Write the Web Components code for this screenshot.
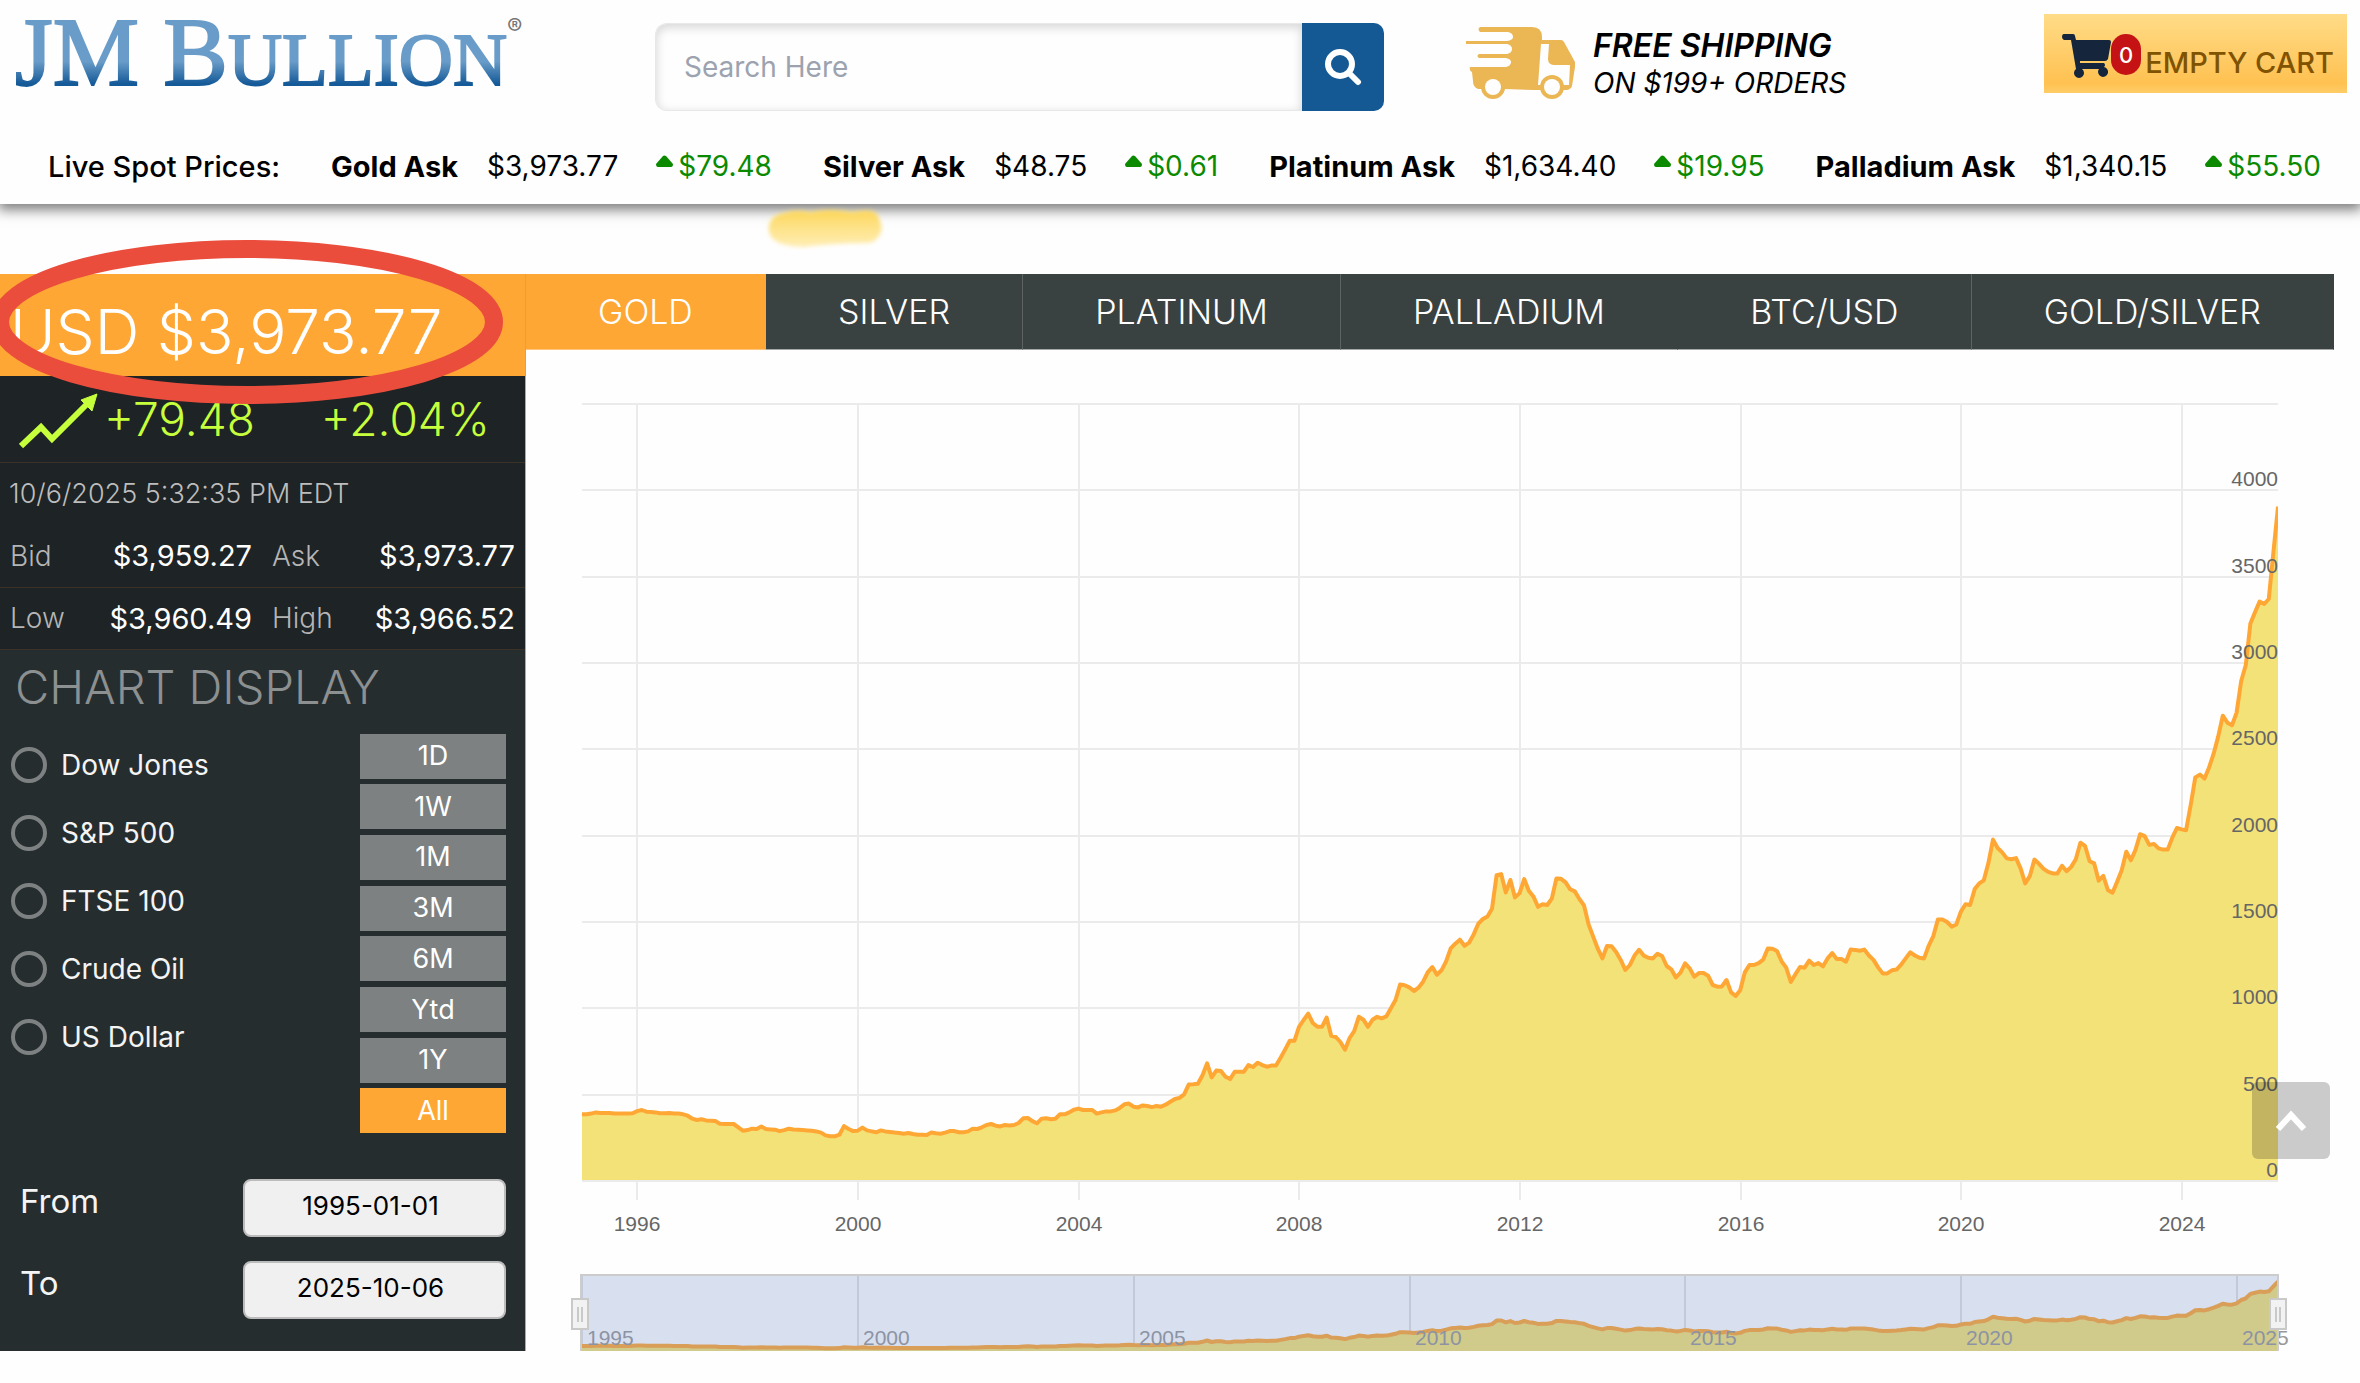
<!DOCTYPE html>
<html lang="en">
<head>
<meta charset="utf-8">
<meta name="viewport" content="width=device-width, initial-scale=1">
<title>Gold Price Chart | JM Bullion</title>
<style>
  html, body { margin: 0; background: #fefefe; }
  body {
    --orange: #ffa735;
    --line: #3a3129;
    font-family: Inter, "Open Sans", sans-serif;
    color: #000;
  }
</style>
</head>
<body>
  <jm-page>
    <jm-header slot="header">
      <spot-price name="Gold Ask" price="$3,973.77" change="$79.48"></spot-price>
      <spot-price name="Silver Ask" price="$48.75" change="$0.61"></spot-price>
      <spot-price name="Platinum Ask" price="$1,634.40" change="$19.95"></spot-price>
      <spot-price name="Palladium Ask" price="$1,340.15" change="$55.50"></spot-price>
    </jm-header>
    <price-panel slot="side"></price-panel>
    <metal-tabs slot="main" active="GOLD" tabs="GOLD,SILVER,PLATINUM,PALLADIUM,BTC/USD,GOLD/SILVER"></metal-tabs>
    <price-chart slot="main"></price-chart>
  </jm-page>
  <scroll-top></scroll-top>

<script>
class JmPage extends HTMLElement {
  constructor() {
    super();
    this.attachShadow({ mode: 'open' }).innerHTML = `
      <style>
        :host { display: block; position: relative; overflow-x: hidden; }
        main { display: flex; align-items: flex-start; margin-top: 70px; }
        .side { flex: 0 0 526px; }
        .content { flex: 1 1 auto; min-width: 0; }
        .marker { position: absolute; left: 760px; top: 200px; width: 132px; height: 56px; }
      </style>
      <slot name="header"></slot>
      <svg class="marker" viewBox="0 0 132 56" aria-hidden="true">
        <defs>
          <linearGradient id="ink" x1="0" y1="0" x2="0" y2="1">
            <stop offset="0" stop-color="#fdd656"/>
            <stop offset=".35" stop-color="#fddf7c"/>
            <stop offset="1" stop-color="#ffeeb5"/>
          </linearGradient>
          <filter id="soft"><feGaussianBlur stdDeviation="2"/></filter>
        </defs>
        <path filter="url(#soft)" fill="url(#ink)" d="M24 13Q34 9 50 12Q70 8 92 12Q112 8 117 14Q123 26 121 32Q116 43 108 43Q74 43 44 47Q24 47 14 40Q6 32 10 22Q14 14 24 13Z"/>
      </svg>
      <main>
        <div class="side"><slot name="side"></slot></div>
        <div class="content"><slot name="main"></slot></div>
      </main>
    `;
  }
}
customElements.define('jm-page', JmPage);

class JmHeader extends HTMLElement {
  constructor() {
    super();
    this.attachShadow({ mode: 'open' }).innerHTML = `
      <style>
        :host {
          display: flex;
          flex-direction: column;
          box-sizing: border-box;
          height: 204px;
          background: #fefefe;
          box-shadow: 0 4px 12px 2px rgba(0, 0, 0, .5);
        }
        .top {
          display: flex;
          align-items: flex-start;
          padding: 14px 13px 0 15px;
          height: 98px;
        }
        .logo {
          flex: 0 0 640px;
          display: flex;
          align-items: flex-start;
          text-decoration: none;
          color: #777;
        }
        .logo .word {
          font-family: "Liberation Serif", serif;
          font-size: 75px;
          line-height: 78px;
          white-space: nowrap;
          background: linear-gradient(#699cc8 56%, #155a98 82%);
          -webkit-background-clip: text;
          background-clip: text;
          -webkit-text-stroke: 2px transparent;
          color: transparent;
        }
        .logo .cap { font-size: 97px; }
        .logo .reg { font-size: 23px; line-height: 26px; }
        form {
          flex: 0 1 729px;
          display: flex;
          height: 88px;
          margin: 9px 0 0;
        }
        input {
          flex: 1 1 auto;
          min-width: 0;
          box-sizing: border-box;
          border: 1px solid #e8e8e8;
          border-right: 0;
          border-radius: 12px 0 0 12px;
          box-shadow: inset 0 3px 10px 1px rgba(0, 0, 0, .15);
          background: #fefefe;
          padding: 0 28px;
          font: 28px Inter, sans-serif;
        }
        input::placeholder { color: #9ca3af; opacity: 1; }
        form button {
          flex: 0 0 82px;
          border: 0;
          border-radius: 0 10px 10px 0;
          background: #145994;
          padding: 0;
          display: grid;
          place-items: center;
        }
        .ship {
          display: flex;
          gap: 18px;
          margin-left: 82px;
          padding-top: 11px;
          font-style: italic;
          white-space: nowrap;
        }
        .ship svg { width: 109px; height: 76px; }
        .ship strong { display: block; font-size: 32px; line-height: 42px; font-weight: 600; }
        .ship span { display: block; font-size: 28px; line-height: 32px; }
        .cart {
          display: flex;
          box-sizing: border-box;
          width: 303px;
          height: 79px;
          margin-left: auto;
          padding: 20px 13px 0 18px;
          border: 0;
          background: linear-gradient(#ffdc88, #ffc151 88%, #ffcd68);
          color: #805300;
          font: 500 29px/34px Inter, sans-serif;
          white-space: nowrap;
        }
        .cart svg { width: 49px; height: 46px; flex: none; }
        .badge {
          flex: none;
          width: 30px;
          height: 41px;
          border-radius: 15px;
          background: #c41215;
          color: #fff;
          font-size: 22px;
          line-height: 42px;
          text-align: center;
        }
        .cart .label { margin: 12px 0 0 auto; }
        .ticker {
          display: flex;
          justify-content: space-between;
          align-items: center;
          height: 40px;
          margin-top: 34px;
          padding: 0 39px 0 48px;
          font-size: 28px;
          white-space: nowrap;
        }
        .ticker .title { font-weight: 500; font-size: 29px; }
      </style>
      <div class="top">
        <a class="logo" href="#" aria-label="JM Bullion">
          <span class="word"><span class="cap">JM B</span>ULLION</span><span class="reg">®</span>
        </a>
        <form role="search">
          <input type="search" placeholder="Search Here" aria-label="Search Here">
          <button type="button" aria-label="Search">
            <svg width="38" height="38" viewBox="0 0 38 38" fill="none" stroke="#fff" stroke-linecap="round">
              <circle cx="16" cy="16" r="12" stroke-width="6"/>
              <path d="M26 26L34 34" stroke-width="6"/>
            </svg>
          </button>
        </form>
        <div class="ship">
          <svg viewBox="0 0 109 76" fill="#ebb654" aria-hidden="true">
            <path d="M14 2H66Q76 2 76 12V15H95Q97 15 98 17L109 37V42L106 61Q105 64 101 65H97A12 12 0 0 1 75 65H69L39 64A12 12 0 0 1 16 64H12Q7 62 7 56L6 47Q3 46 4 42H40Q45 41 45 37Q45 34 40 33H13Q10 31 13 29H41Q46 28 46 24Q46 20 41 19H0V16H41Q47 15 47 12Q47 8 42 7H14Q11 4 14 2Z"/>
            <path fill="#fefefe" d="M75 19H83L82 34Q82 40 89 40H104L103 60H97A12 12 0 0 0 75 60H72Z"/>
            <circle cx="27" cy="62" r="12"/>
            <circle cx="27" cy="62" r="8" fill="#fefefe"/>
            <circle cx="86" cy="62" r="12"/>
            <circle cx="86" cy="62" r="8" fill="#fefefe"/>
          </svg>
          <div><strong>FREE SHIPPING</strong><span>ON $199+ ORDERS</span></div>
        </div>
        <button type="button" class="cart">
          <svg viewBox="0 0 49 46" fill="#15253c" aria-hidden="true">
            <path d="M2 0H11Q13 0 13 2L14 6H47Q49 6 49 8L46 25Q45 27 43 27H18V29H42Q44 31 42 33H42A5 5 0 1 1 37 35H20A5 5 0 1 1 14 35L9 6H2Q0 5 0 3Q0 0 2 0Z"/>
          </svg>
          <span class="badge">0</span>
          <span class="label">EMPTY CART</span>
        </button>
      </div>
      <div class="ticker">
        <span class="title">Live Spot Prices:</span>
        <slot></slot>
      </div>
    `;
  }
}
customElements.define('jm-header', JmHeader);

class SpotPrice extends HTMLElement {
  connectedCallback() {
    if (!this.shadowRoot) this.attachShadow({ mode: 'open' });
    this.shadowRoot.innerHTML = `
      <style>
        :host { display: flex; align-items: center; }
        b { font-weight: 700; font-size: 29px; margin-right: 29px; }
        svg { width: 17px; height: 12px; margin: 0 5px 10px 38px; }
        .change { color: #0b8a00; }
      </style>
      <b>${this.getAttribute('name')}</b>
      <span>${this.getAttribute('price')}</span>
      <svg viewBox="0 0 17 12" aria-hidden="true"><path fill="#0b8a00" d="M7 1Q8 0 10 1L17 9Q17 12 15 12H2Q0 12 0 9Z"/></svg>
      <span class="change">${this.getAttribute('change')}</span>
    `;
  }
}
customElements.define('spot-price', SpotPrice);

class MetalTabs extends HTMLElement {
  connectedCallback() {
    if (!this.shadowRoot) this.attachShadow({ mode: 'open' });
    const active = this.getAttribute('active');
    const tabs = this.getAttribute('tabs').split(',');
    this.shadowRoot.innerHTML = `
      <style>
        :host { display: block; margin-right: 26px; }
        nav { display: flex; }
        button {
          flex: 1 1 auto;
          height: 76px;
          padding: 0;
          border: 0;
          border-right: 1px solid #5c6362;
          border-bottom: 1px solid #a5a8a8;
          background: #3a4241;
          color: #fff;
          font: 300 34px/76px Inter, sans-serif;
          white-space: nowrap;
        }
        button:last-child, button:nth-child(4) { border-right-color: #3a4241; }
        .active { background: var(--orange); border-right-color: var(--orange); border-bottom-color: #ffc67c; }
      </style>
      <nav>${tabs.map(t => `<button type="button" class="${t === active ? 'active' : ''}">${t}</button>`).join('')}</nav>
    `;
  }
}
customElements.define('metal-tabs', MetalTabs);

class PricePanel extends HTMLElement {
  constructor() {
    super();
    const indexes = ['Dow Jones', 'S&amp;P 500', 'FTSE 100', 'Crude Oil', 'US Dollar'];
    const ranges = ['1D', '1W', '1M', '3M', '6M', 'Ytd', '1Y', 'All'];
    this.attachShadow({ mode: 'open' }).innerHTML = `
      <style>
        :host {
          display: block;
          background: #262d2f;
          border-right: 1px solid #a9abab;
          color: #fff;
          font-weight: 300;
        }
        .price {
          position: relative;
          box-sizing: border-box;
          height: 102px;
          padding: 20px 10px 0;
          background: var(--orange);
          font-size: 62px;
          line-height: 76px;
          white-space: nowrap;
        }
        .ring {
          position: absolute;
          left: -10px;
          top: -36px;
          width: 516px;
          height: 168px;
        }
        .move {
          display: flex;
          align-items: center;
          box-sizing: border-box;
          height: 86px;
          padding: 0 0 0 19px;
          background: #1e2325;
          color: #c6ff3c;
          font-size: 46px;
        }
        .move svg { width: 79px; height: 56px; margin: 4px 6px 0 0; }
        .move span + span { margin-left: 66px; }
        .quote { background: #1e2325; }
        .date {
          height: 62px;
          border-top: 1px solid var(--line);
          padding-left: 9px;
          color: #bdbdbd;
          font-size: 27px;
          line-height: 62px;
        }
        table { width: 100%; border-collapse: collapse; table-layout: fixed; font-size: 29px; }
        tr { height: 62px; border-bottom: 1px solid var(--line); }
        th, td { padding: 0; font-weight: 400; }
        th { text-align: left; font-weight: 300; color: #b5b5b5; font-size: 28px; }
        th:nth-child(1) { width: 80px; padding-left: 10px; }
        td:nth-child(2) { width: 162px; }
        th:nth-child(3) { width: 80px; padding-left: 20px; }
        td { text-align: right; white-space: nowrap; }
        td:last-child { padding-right: 10px; }
        .display { padding: 10px 19px 32px 11px; }
        h2 {
          margin: 0 4px 20px;
          color: #8c9091;
          font-size: 47px;
          line-height: 54px;
          font-weight: 300;
        }
        .options { display: flex; justify-content: space-between; align-items: flex-start; }
        fieldset { border: 0; margin: 0; padding: 13px 0 0; display: grid; gap: 32px; }
        fieldset label { display: flex; align-items: center; gap: 14px; height: 36px; font-size: 28px; font-weight: 400; color: #f4f4f4; }
        input[type=radio] {
          appearance: none;
          width: 36px;
          height: 36px;
          margin: 0;
          border: 4px solid #7d8181;
          border-radius: 50%;
        }
        .ranges { display: flex; flex-direction: column; justify-content: space-between; width: 146px; height: 400px; }
        .ranges button {
          height: 45px;
          padding: 0;
          border: 0;
          background: #7d8181;
          color: #fff;
          font: 400 27px/42px Inter, sans-serif;
        }
        .ranges .on { background: var(--orange); }
        .dates { display: grid; gap: 24px; margin-top: 45px; }
        .dates label { display: flex; justify-content: space-between; align-items: flex-start; padding-left: 9px; font-size: 33px; line-height: 44px; font-weight: 400; color: #f4f4f4; }
        .dates input {
          box-sizing: border-box;
          width: 263px;
          height: 58px;
          padding: 0 8px 4px 0;
          border: 2px solid #bcbcbc;
          border-radius: 8px;
          background: #f0f0f0;
          color: #000;
          font: 26px Inter, sans-serif;
          text-align: center;
        }
      </style>
      <div class="price">USD $3,973.77
        <svg class="ring" viewBox="0 0 516 168" aria-hidden="true">
          <ellipse cx="257" cy="84" rx="247" ry="73" fill="none" stroke="#eb4d3d" stroke-width="18"/>
        </svg>
      </div>
      <div class="move">
        <svg viewBox="0 0 79 56" aria-hidden="true">
          <path d="M2 53L22 34L33 46L68 11" fill="none" stroke="#c6ff3c" stroke-width="6"/>
          <path d="M78 1L73 18L62 7Z" fill="#c6ff3c" stroke="#c6ff3c"/>
        </svg>
        <span>+79.48</span><span>+2.04%</span>
      </div>
      <div class="quote">
        <div class="date">10/6/2025 5:32:35 PM EDT</div>
        <table>
          <tr><th scope="row">Bid</th><td>$3,959.27</td><th scope="row">Ask</th><td>$3,973.77</td></tr>
          <tr><th scope="row">Low</th><td>$3,960.49</td><th scope="row">High</th><td>$3,966.52</td></tr>
        </table>
      </div>
      <div class="display">
        <h2>CHART DISPLAY</h2>
        <div class="options">
          <fieldset aria-label="Compare with">
            ${indexes.map(n => `<label><input type="radio" name="index">${n}</label>`).join('')}
          </fieldset>
          <div class="ranges">
            ${ranges.map(r => `<button type="button"${r === 'All' ? ' class="on"' : ''}>${r}</button>`).join('')}
          </div>
        </div>
        <div class="dates">
          <label>From <input type="text" value="1995-01-01"></label>
          <label>To <input type="text" value="2025-10-06"></label>
        </div>
      </div>
    `;
  }
}
customElements.define('price-panel', PricePanel);

// Monthly gold price in USD, January 1995 to October 2025
const GOLD = [
  386,386,390,397,394,394,394,390,390,390,390,392,
  405,411,401,399,397,392,392,394,390,390,386,378,
  361,353,357,351,349,347,332,330,330,330,311,291,
  295,303,301,315,301,299,297,289,295,303,299,297,
  295,293,291,287,280,264,259,259,268,318,301,289,
  291,309,293,287,282,293,287,284,280,278,274,278,
  272,268,268,266,280,276,274,280,289,289,282,282,
  287,303,301,311,324,330,320,316,324,322,324,336,
  363,365,347,334,361,363,357,361,386,386,397,413,
  419,411,411,411,390,397,403,403,409,423,444,448,
  430,426,438,434,428,434,430,442,459,475,481,502,
  558,560,563,612,681,600,639,637,604,590,633,633,
  633,671,660,685,671,662,668,668,714,762,812,812,
  893,932,969,915,893,893,946,841,834,805,760,828,
  868,951,934,893,934,951,942,953,1000,1048,1137,1133,
  1121,1100,1119,1154,1208,1239,1194,1220,1272,1347,1374,1397,
  1362,1380,1428,1490,1517,1532,1577,1770,1777,1671,1743,1642,
  1667,1748,1681,1648,1588,1602,1598,1635,1752,1750,1729,1689,
  1677,1633,1596,1486,1415,1345,1289,1361,1359,1326,1280,1222,
  1251,1305,1339,1305,1293,1289,1316,1303,1245,1226,1179,1206,
  1260,1231,1183,1204,1204,1189,1135,1125,1127,1164,1092,1071,
  1104,1208,1251,1251,1262,1282,1347,1345,1332,1272,1235,1152,
  1197,1239,1235,1276,1251,1262,1243,1289,1320,1285,1285,1270,
  1340,1338,1333,1340,1306,1280,1237,1202,1202,1220,1224,1253,
  1289,1324,1306,1293,1289,1362,1418,1514,1514,1500,1473,1485,
  1560,1603,1598,1690,1723,1741,1841,1977,1928,1903,1868,1863,
  1870,1810,1723,1765,1861,1837,1808,1790,1781,1781,1825,1794,
  1819,1863,1959,1941,1852,1839,1739,1767,1685,1669,1732,1799,
  1906,1857,1917,2008,1997,1946,1952,1926,1919,1919,1988,2044,
  2036,2031,2177,2337,2353,2330,2395,2476,2573,2694,2654,2639,
  2712,2895,2988,3229,3293,3355,3341,3370,3640,3905
];

class PriceChart extends HTMLElement {
  constructor() {
    super();
    const left = 56, right = 1752, top = 54, bottom = 831;
    const year = 55.17;
    const x = y => Math.round(left + (y - 1995) * year);
    const y = v => Math.round(bottom - v * .1727);
    const navTop = 925, navBottom = 1001;

    const points = (base, scale) => GOLD.map((v, i) => {
      const px = left + (right - left) * i / (GOLD.length - 1);
      return `${px.toFixed(1)},${(base - v * scale).toFixed(1)}`;
    }).join(' ');
    const main = points(bottom, .1727);
    const nav = points(1003, .0183);

    const years = [1996, 2000, 2004, 2008, 2012, 2016, 2020, 2024];
    const prices = [0, 500, 1000, 1500, 2000, 2500, 3000, 3500, 4000];
    const navYears = [1995, 2000, 2005, 2010, 2015, 2020, 2025];
    const handle = hx => `
      <g transform="translate(${hx} 949)" stroke="#c9c9c9">
        <rect x="-8" y="0" width="16" height="30" fill="#f2f2f2" stroke-width="2"/>
        <path d="M-2 8V23M2 8V23" stroke-width="2"/>
      </g>`;

    this.attachShadow({ mode: 'open' }).innerHTML = `
      <style>
        :host { display: block; }
        svg { display: block; width: 100%; font: 21px "Liberation Sans", Arial, sans-serif; }
        .grid path { stroke: #ebebeb; stroke-width: 2; }
        .area { fill: #f3e278; }
        .line { fill: none; stroke: #ffa735; stroke-width: 4; stroke-linejoin: round; }
        .nav .grid path { stroke: #e0e0e0; }
        text { fill: #666; }
        .nav text { fill: #999; }
      </style>
      <svg viewBox="0 0 1834 1001" role="img" aria-label="Gold price, 1995 to 2025">
        <defs>
          <clipPath id="plot"><rect x="${left}" y="${top}" width="${right - left}" height="${bottom - top}"/></clipPath>
          <clipPath id="navplot"><rect x="${left}" y="${navTop}" width="${right - left}" height="${navBottom - navTop}"/></clipPath>
        </defs>
        <g class="grid">
          ${[...prices, 4500].map(p => `<path d="M${left} ${y(p)}H${right}"/>`).join('')}
          ${years.map(n => `<path d="M${x(n)} ${top}V850"/>`).join('')}
        </g>
        <g clip-path="url(#plot)">
          <polygon class="area" points="${left},${bottom - 1} ${main} ${right},${bottom - 1}"/>
          <polyline class="line" points="${main}"/>
        </g>
        <g text-anchor="middle">
          ${years.map(n => `<text x="${x(n)}" y="881">${n}</text>`).join('')}
        </g>
        <g text-anchor="end">
          ${prices.map(p => `<text x="${right}" y="${y(p) - 4}">${p}</text>`).join('')}
        </g>
        <g class="nav">
          <g class="grid">
            ${navYears.map(n => `<path d="M${x(n)} ${navTop}V${navBottom}"/>`).join('')}
          </g>
          <g clip-path="url(#navplot)">
            <polygon class="area" points="${left},1003 ${nav} ${right},1003"/>
            <polyline class="line" points="${nav}"/>
          </g>
          ${navYears.map(n => `<text x="${x(n) + 5}" y="995">${n}</text>`).join('')}
          <rect x="${left}" y="${navTop}" width="${right - left}" height="${navBottom - navTop}" fill="#6685c2" fill-opacity=".25"/>
          <path d="M${left - 1} ${navBottom}V${navTop}H${right}V${navBottom}" fill="none" stroke="#ccc" stroke-width="2"/>
          ${handle(left - 2)}
          ${handle(right)}
        </g>
      </svg>
    `;
  }
}
customElements.define('price-chart', PriceChart);

class ScrollTop extends HTMLElement {
  constructor() {
    super();
    this.attachShadow({ mode: 'open' }).innerHTML = `
      <style>
        :host { position: fixed; right: 30px; bottom: 224px; }
        button {
          display: grid;
          place-items: center;
          width: 78px;
          height: 77px;
          padding: 0;
          border: 0;
          border-radius: 6px;
          background: rgba(0, 0, 0, .2);
        }
      </style>
      <button type="button" aria-label="Back to top">
        <svg width="32" height="22" viewBox="0 0 32 22" fill="none" stroke="#fff" stroke-width="6"><path d="M3 19L16 5L29 19"/></svg>
      </button>
    `;
  }
}
customElements.define('scroll-top', ScrollTop);
</script>
</body>
</html>
